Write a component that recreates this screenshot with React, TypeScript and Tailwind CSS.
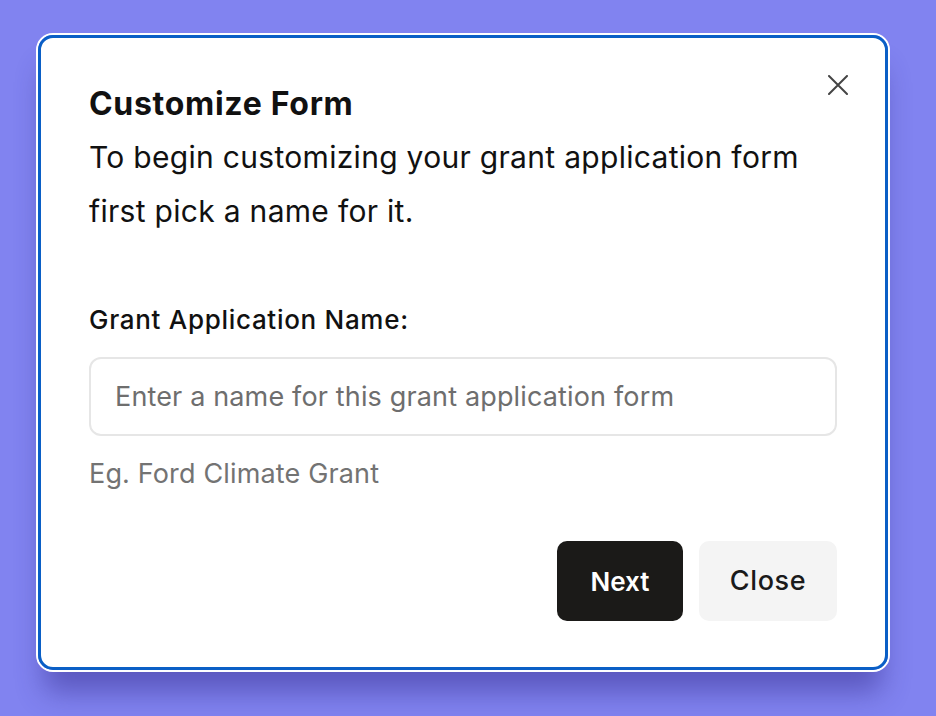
import React from "react";

export default function App() {
  return (
    <div
      className="min-h-screen w-full bg-[#8183f0] pt-[33px] pl-[36px]"
      style={{ fontFamily: "Inter, 'Noto Sans', sans-serif" }}
    >
      <div className="w-[854px] rounded-[17px] border-2 border-white shadow-[0_28px_28px_-8px_rgba(45,35,130,0.45)]">
        <div className="relative rounded-[15px] border-[3px] border-[#0a5fc6] bg-white px-[48px] pt-[48px] pb-[46px]">
          <button className="absolute top-[37px] right-[37px] flex h-[20px] w-[20px] items-center justify-center text-[#444]">
            <svg width="20" height="20" viewBox="0 0 20 20" fill="none" stroke="currentColor" strokeWidth="2" strokeLinecap="round">
              <path d="M1 1 L19 19 M19 1 L1 19" />
            </svg>
          </button>
          <h2 className="text-[32px] leading-[36px] font-bold tracking-[0.7px] text-[#111]">Customize Form</h2>
          <p className="mt-[8px] text-[30px] leading-[54px] tracking-[0.3px] text-[#111]">
            To begin customizing your grant application form
            <br />
            first pick a name for it.
          </p>
          <label className="mt-[66px] block text-[26px] leading-[32px] font-medium tracking-[0.7px] text-[#111]">
            Grant Application Name:
          </label>
          <input
            className="mt-[21px] block h-[79px] w-full rounded-[12px] border-2 border-[#e6e6e6] px-[24px] text-[27px] tracking-[0.15px] text-[#111] outline-none placeholder:text-[#6e6e6e]"
            placeholder="Enter a name for this grant application form"
          />
          <p className="mt-[20px] text-[27px] leading-[36px] tracking-[0.15px] text-[#737373]">Eg. Ford Climate Grant</p>
          <div className="mt-[49px] flex justify-end gap-[16px]">
            <button className="h-[80px] w-[126px] rounded-[10px] bg-[#1b1a18] text-[26px] font-semibold text-white">
              Next
            </button>
            <button className="h-[80px] w-[138px] rounded-[10px] bg-[#f4f4f4] text-[27px] font-medium tracking-[0.6px] text-[#1a1a1a]">
              Close
            </button>
          </div>
        </div>
      </div>
    </div>
  );
}
